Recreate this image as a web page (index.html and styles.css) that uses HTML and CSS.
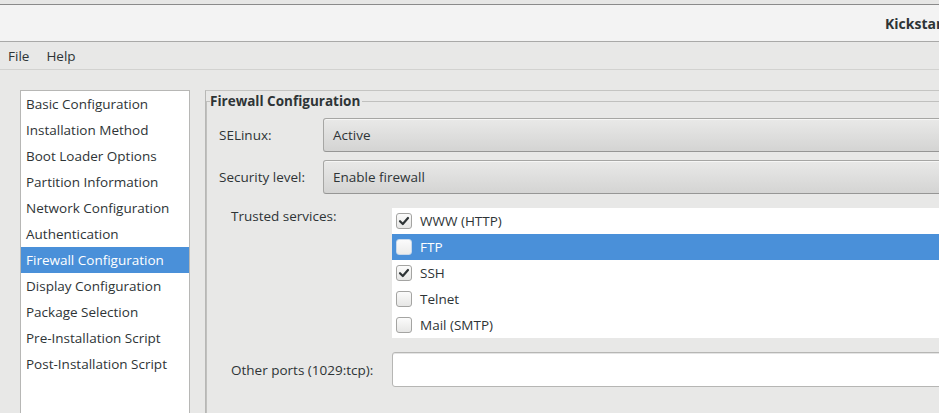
FILE: index.html
```html
<!DOCTYPE html>
<html>
<head>
<meta charset="utf-8">
<title>Kickstart Configurator</title>
<link rel="stylesheet" href="styles.css">
</head>
<body>
<div class="strip"></div>
<div class="titlebar">Kickstart Configurator</div>
<div class="menubar"><span>File</span><span>Help</span></div>
<div class="content">
  <div class="sidebar">
    <div class="item">Basic Configuration</div>
    <div class="item">Installation Method</div>
    <div class="item">Boot Loader Options</div>
    <div class="item">Partition Information</div>
    <div class="item">Network Configuration</div>
    <div class="item">Authentication</div>
    <div class="item sel">Firewall Configuration</div>
    <div class="item">Display Configuration</div>
    <div class="item">Package Selection</div>
    <div class="item">Pre-Installation Script</div>
    <div class="item">Post-Installation Script</div>
  </div>
  <div class="panel">
    <div class="ghead"><span class="tick"></span><span class="legend">Firewall Configuration</span><span class="gline"></span></div>
    <div class="gbody">
      <div class="combos">
        <div class="lbl">SELinux:</div>
        <div class="combo">Active</div>
        <div class="lbl">Security level:</div>
        <div class="combo">Enable firewall</div>
      </div>
      <div class="services">
        <div class="lbl top">Trusted services:</div>
        <div class="svclist">
          <div class="svc"><span class="cb"><svg viewBox="0 0 16 16" width="16" height="16"><path d="M4 8.2 L6.8 11 L12 5" fill="none" stroke="#2e3436" stroke-width="2.2" stroke-linecap="round" stroke-linejoin="round"/></svg></span>WWW (HTTP)</div>
          <div class="svc sel"><span class="cb"></span>FTP</div>
          <div class="svc"><span class="cb"><svg viewBox="0 0 16 16" width="16" height="16"><path d="M4 8.2 L6.8 11 L12 5" fill="none" stroke="#2e3436" stroke-width="2.2" stroke-linecap="round" stroke-linejoin="round"/></svg></span>SSH</div>
          <div class="svc"><span class="cb"></span>Telnet</div>
          <div class="svc"><span class="cb"></span>Mail (SMTP)</div>
        </div>
        <div class="lbl">Other ports (1029:tcp):</div>
        <div class="entry"></div>
      </div>
    </div>
  </div>
</div>
</body>
</html>
```
FILE: styles.css
```css
* { box-sizing: border-box; }
html, body { margin: 0; padding: 0; }
body {
  width: 939px;
  height: 413px;
  overflow: hidden;
  background: #e8e8e7;
  font-family: "Open Sans", "Noto Sans", sans-serif;
  font-size: 13.5px;
  color: #2e3436;
}
.strip {
  height: 5px;
  background: #e6e6e5;
  border-bottom: 1px solid #8a8a8a;
}
.titlebar {
  height: 37px;
  background: #f3f3f3;
  border-bottom: 1px solid #a9a9a8;
  display: flex;
  align-items: center;
  padding-left: 885px;
  white-space: nowrap;
  overflow: hidden;
  font-weight: bold;
  font-size: 14px;
}
.menubar {
  height: 28px;
  border-bottom: 1px solid #d2d2d0;
  display: flex;
  align-items: center;
  gap: 17px;
  padding-left: 8px;
}
.content {
  display: flex;
  gap: 15px;
  padding: 20px 0 0 20px;
}
.sidebar {
  flex: none;
  width: 170px;
  height: 340px;
  background: #fff;
  border: 1px solid #b7b7b5;
}
.item {
  height: 26px;
  line-height: 26px;
  padding-left: 5px;
  white-space: nowrap;
}
.item.sel { background: #4a90d9; color: #fff; }
.panel {
  flex: 1;
  min-width: 0;
  height: 340px;
  border-left: 1px solid #b7b7b5;
  border-top: 1px solid #c4c4c2;
}
.ghead {
  display: flex;
  height: 20px;
  align-items: center;
}
.tick {
  align-self: flex-end;
  width: 4px;
  height: 10px;
  border-left: 1px solid #c0c0be;
  border-top: 1px solid #c0c0be;
}
.legend { font-weight: bold; padding-right: 2px; white-space: nowrap; }
.gline {
  align-self: flex-end;
  flex: 1;
  height: 10px;
  border-top: 1px solid #c0c0be;
}
.gbody {
  border-left: 1px solid #c0c0be;
  padding: 7px 0 40px 12px;
}
.combos {
  display: grid;
  grid-template-columns: 104px 700px;
  row-gap: 8px;
  align-items: center;
}
.lbl { white-space: nowrap; }
.lbl.top { align-self: start; line-height: 17px; }
.combo {
  height: 34px;
  display: flex;
  align-items: center;
  padding-left: 9px;
  border: 1px solid #a6a6a4;
  border-bottom-color: #969695;
  border-radius: 3px;
  background: linear-gradient(#e9e9e8, #d4d4d3);
  box-shadow: inset 0 1px #f6f6f5;
}
.services {
  margin-top: 14px;
  padding-left: 12px;
  display: grid;
  grid-template-columns: 161px 700px;
  row-gap: 14px;
  align-items: center;
}
.svclist { background: #fff; }
.svc {
  height: 26px;
  display: flex;
  align-items: center;
  padding-left: 4px;
}
.svc.sel { background: #4a90d9; color: #fff; }
.cb {
  flex: none;
  width: 16px;
  height: 16px;
  margin-right: 8px;
  border: 1px solid #a4a4a2;
  border-radius: 3px;
  background: linear-gradient(#fbfbfb, #e6e6e5);
  display: flex;
  align-items: center;
  justify-content: center;
}
.cb svg { display: block; margin: -1px; }
.svc.sel .cb { border-color: #c8d8ea; background: linear-gradient(#fbfbfb, #ececeb); }
.entry {
  height: 35px;
  background: #fff;
  border: 1px solid #b6b6b4;
  border-radius: 3px;
  box-shadow: inset 0 1px #e4e4e4;
}
```
